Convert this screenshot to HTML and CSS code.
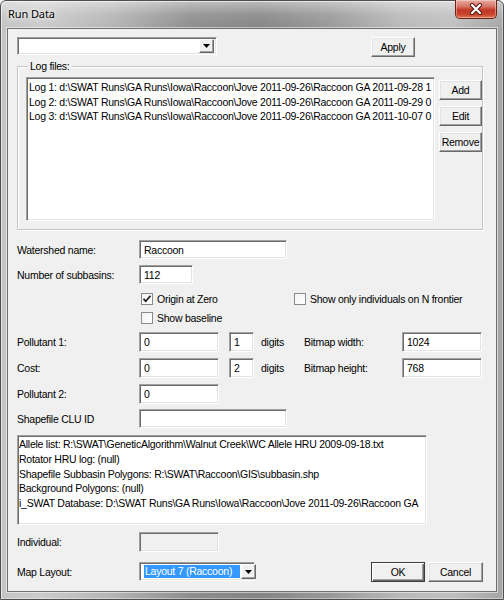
FILE: index.html
```html
<!DOCTYPE html>
<html>
<head>
<meta charset="utf-8">
<title>Run Data</title>
<link rel="stylesheet" href="styles.css">
</head>
<body>
<div class="window">
  <div class="titlebar">
    <span class="title">Run Data</span>
    <span class="close-btn">
      <svg width="16" height="12" viewBox="0 0 16 12">
        <path d="M4 2 L12 10 M12 2 L4 10" stroke="#4a1610" stroke-width="4" stroke-linecap="round"/>
        <path d="M4 2 L12 10 M12 2 L4 10" stroke="#ffffff" stroke-width="2.2" stroke-linecap="round"/>
      </svg>
    </span>
  </div>
  <div class="client">
    <div class="row row-top">
      <div class="combo combo-top">
        <span class="combo-text"></span>
        <span class="combo-btn"><svg width="7" height="4" viewBox="0 0 7 4"><path d="M0 0 H7 L3.5 4 Z" fill="#000"/></svg></span>
      </div>
      <div class="btn btn-apply">Apply</div>
    </div>

    <div class="group">
      <span class="group-title">Log files:</span>
      <div class="group-body">
        <div class="sunken listbox log-list">
          <div class="item">Log 1: d:\SWAT Runs\GA Runs\Iowa\Raccoon\Jove 2011-09-26\Raccoon GA 2011-09-28 1</div>
          <div class="item">Log 2: d:\SWAT Runs\GA Runs\Iowa\Raccoon\Jove 2011-09-26\Raccoon GA 2011-09-29 0</div>
          <div class="item">Log 3: d:\SWAT Runs\GA Runs\Iowa\Raccoon\Jove 2011-09-26\Raccoon GA 2011-10-07 0</div>
        </div>
        <div class="side-buttons">
          <div class="btn btn-side">Add</div>
          <div class="btn btn-side">Edit</div>
          <div class="btn btn-side">Remove</div>
        </div>
      </div>
    </div>

    <div class="row row-watershed">
      <span class="label">Watershed name:</span>
      <div class="sunken field f-wide">Raccoon</div>
    </div>
    <div class="row row-subbasins">
      <span class="label">Number of subbasins:</span>
      <div class="sunken field f-small">112</div>
    </div>
    <div class="row row-check1">
      <span class="label"></span>
      <span class="check checked"><svg width="10" height="10" viewBox="0 0 10 10"><path d="M1.5 4.8 L3.8 7.3 L8.5 1.8" fill="none" stroke="#1c1c1c" stroke-width="1.7"/></svg></span>
      <span class="check-label cl-origin">Origin at Zero</span>
      <span class="check"></span>
      <span class="check-label">Show only individuals on N frontier</span>
    </div>
    <div class="row row-check2">
      <span class="label"></span>
      <span class="check"></span>
      <span class="check-label">Show baseline</span>
    </div>
    <div class="row row-p1">
      <span class="label">Pollutant 1:</span>
      <div class="sunken field f-num">0</div>
      <div class="sunken field f-digit">1</div>
      <span class="digits">digits</span>
      <span class="bm-label">Bitmap width:</span>
      <div class="sunken field f-num">1024</div>
    </div>
    <div class="row row-cost">
      <span class="label">Cost:</span>
      <div class="sunken field f-num">0</div>
      <div class="sunken field f-digit">2</div>
      <span class="digits">digits</span>
      <span class="bm-label">Bitmap height:</span>
      <div class="sunken field f-num">768</div>
    </div>
    <div class="row row-p2">
      <span class="label">Pollutant 2:</span>
      <div class="sunken field f-num">0</div>
    </div>
    <div class="row row-clu">
      <span class="label">Shapefile CLU ID</span>
      <div class="sunken field f-wide f-clu"></div>
    </div>

    <div class="sunken listbox info-list">
      <div class="item">Allele list: R:\SWAT\GeneticAlgorithm\Walnut Creek\WC Allele HRU 2009-09-18.txt</div>
      <div class="item">Rotator HRU log: (null)</div>
      <div class="item">Shapefile Subbasin Polygons: R:\SWAT\Raccoon\GIS\subbasin.shp</div>
      <div class="item">Background Polygons: (null)</div>
      <div class="item">i_SWAT Database: D:\SWAT Runs\GA Runs\Iowa\Raccoon\Jove 2011-09-26\Raccoon GA</div>
    </div>

    <div class="row row-individual">
      <span class="label">Individual:</span>
      <div class="sunken field f-num disabled"></div>
    </div>
    <div class="row row-map">
      <span class="label">Map Layout:</span>
      <div class="combo combo-map">
        <span class="combo-text"><span class="selected">Layout 7 (Raccoon)</span></span>
        <span class="combo-btn"><svg width="7" height="4" viewBox="0 0 7 4"><path d="M0 0 H7 L3.5 4 Z" fill="#000"/></svg></span>
      </div>
      <div class="btn btn-ok">OK</div>
      <div class="btn btn-cancel">Cancel</div>
    </div>
  </div>
</div>
</body>
</html>
```
FILE: styles.css
```css
html, body {
  margin: 0;
  padding: 0;
}
body {
  width: 504px;
  height: 600px;
  overflow: hidden;
  background: #ffffff;
  font-family: "Liberation Sans", Arial, sans-serif;
  font-size: 10.5px;
  letter-spacing: -0.25px;
  color: #000;
}

.window {
  width: 504px;
  height: 600px;
  box-sizing: border-box;
  display: flex;
  flex-direction: column;
  border: 1px solid #4e4e4e;
  border-radius: 6px 6px 0 0;
  padding: 0 6px 7px 6px;
  background:
    linear-gradient(180deg, rgba(255,255,255,0.45) 0, rgba(255,255,255,0.1) 14px, rgba(255,255,255,0) 28px),
    linear-gradient(90deg, #c4c4c4 0, #cbcbcb 40px, #b5b5b5 110px, #8d8d8d 190px, #858585 260px, #999999 330px, #b9b9b9 400px, #c0c0c0 450px, #a4a4a4 504px);
  box-shadow: inset 1px 1px 0 rgba(255,255,255,0.6), inset -1px -1px 0 rgba(255,255,255,0.4);
}

.titlebar {
  height: 27px;
  margin: 0 -6px;
  display: flex;
  align-items: flex-start;
}
.title {
  font-family: "Noto Sans", "Open Sans", sans-serif;
  font-size: 11px;
  letter-spacing: -0.1px;
  margin: 5px 0 0 7px;
  color: #000;
  text-shadow: 0 0 6px rgba(255,255,255,0.95), 0 0 3px rgba(255,255,255,0.9);
}
.close-btn {
  margin-left: auto;
  margin-right: 6px;
  margin-top: -1px;
  width: 42px;
  height: 19px;
  box-sizing: border-box;
  border: 1px solid #6b2118;
  border-top: none;
  border-radius: 0 0 5px 5px;
  background: linear-gradient(180deg, #e9a99e 0, #d8776a 35%, #c23a26 55%, #c9432c 80%, #e07a55 100%);
  box-shadow: inset 0 0 0 1px rgba(255,255,255,0.35);
  display: flex;
  align-items: center;
  justify-content: center;
}

.client {
  flex: 1;
  background: #f0f0f0;
  border: 1px solid #6f6f6f;
  padding: 8px 13px 0 9px;
  display: flex;
  flex-direction: column;
  box-shadow: 0 0 0 1px rgba(255,255,255,0.5);
}

.row {
  display: flex;
  align-items: center;
}
.label {
  width: 122px;
  flex: none;
  white-space: nowrap;
}

/* sunken edit look */
.sunken {
  box-sizing: border-box;
  background: #fff;
  border: 1px solid;
  border-color: #a0a0a0 #ffffff #ffffff #a0a0a0;
  box-shadow: inset 1px 1px 0 #6d6d6d, inset -1px -1px 0 #e3e3e3;
}
.field {
  height: 20px;
  padding: 3px 0 0 4px;
  line-height: 12px;
  white-space: nowrap;
  overflow: hidden;
}
.field.disabled {
  background: #f0f0f0;
}
.f-wide { width: 148px; height: 19px; }
.f-small { width: 54px; height: 19px; }
.f-num { width: 80px; }
.f-digit { width: 25px; margin-left: 10px; }

/* raised button look */
.btn {
  box-sizing: border-box;
  height: 20px;
  display: flex;
  align-items: center;
  justify-content: center;
  background: #f0f0f0;
  border: 1px solid;
  border-color: #ffffff #696969 #696969 #ffffff;
  box-shadow: inset -1px -1px 0 #a0a0a0, inset 1px 1px 0 #e3e3e3;
  flex: none;
}

/* combo boxes */
.combo {
  box-sizing: border-box;
  display: flex;
  align-items: center;
  background: #fff;
  border: 1px solid;
  border-color: #a0a0a0 #ffffff #ffffff #a0a0a0;
  box-shadow: inset 1px 1px 0 #6d6d6d, inset -1px -1px 0 #e3e3e3;
  padding: 2px 2px 2px 2px;
  flex: none;
}
.combo-text {
  flex: 1;
  height: 100%;
  display: flex;
  align-items: center;
}
.combo-btn {
  width: 15px;
  height: 14px;
  box-sizing: border-box;
  background: #f0f0f0;
  border: 1px solid;
  border-color: #ffffff #696969 #696969 #ffffff;
  box-shadow: inset -1px -1px 0 #a0a0a0;
  display: flex;
  align-items: center;
  justify-content: center;
  flex: none;
}

.row-top {
  align-items: flex-start;
}
.combo-top {
  width: 200px;
  height: 18px;
}
.btn-apply {
  width: 44px;
  margin-left: 154px;
}

/* group box */
.group {
  margin-top: 9px;
  height: 164px;
  box-sizing: border-box;
  border: 1px solid #c4c4c4;
  box-shadow: inset 1px 1px 0 #ffffff, 1px 1px 0 #ffffff;
  padding: 0 0 0 8px;
  display: flex;
  flex-direction: column;
}
.group-title {
  align-self: flex-start;
  margin: -7px 0 0 2px;
  padding: 0 2px;
  line-height: 13px;
  background: #f0f0f0;
}
.group-body {
  display: flex;
  margin-top: 4px;
}
.listbox {
  overflow: hidden;
  white-space: nowrap;
}
.log-list {
  width: 410px;
  height: 144px;
  padding: 2px 0 0 2px;
}
.item {
  line-height: 14.6px;
  white-space: nowrap;
}
.side-buttons {
  display: flex;
  flex-direction: column;
  margin-left: 4px;
  margin-top: 3px;
  gap: 6px;
}
.btn-side {
  width: 43px;
}

.row-watershed { margin-top: 10px; }
.row-subbasins { margin-top: 6px; }
.row-check1 { margin-top: 9px; }
.row-check2 { margin-top: 7px; }
.row-p1 { margin-top: 8px; }
.row-cost { margin-top: 6px; }
.row-p2 { margin-top: 6px; }
.row-clu { margin-top: 5px; }

.check {
  width: 12px;
  height: 12px;
  box-sizing: border-box;
  flex: none;
  margin-left: 2px;
  background: linear-gradient(135deg, #f2f2f2, #ffffff);
  border: 1px solid #8b8b8b;
  display: flex;
  align-items: center;
  justify-content: center;
}
.row-check1 .check + .check-label + .check {
  margin-left: 0;
}
.check-label {
  margin-left: 4px;
  white-space: nowrap;
}
.cl-origin {
  width: 137px;
  flex: none;
}

.digits {
  margin-left: 7px;
  width: 43px;
  flex: none;
}
.bm-label {
  width: 98px;
  flex: none;
}

.info-list {
  margin-top: 7px;
  width: 410px;
  height: 90px;
  padding: 1px 0 0 1px;
}
.info-list .item {
  line-height: 14.8px;
}

.row-individual { margin-top: 7px; }
.row-map {
  margin-top: 10px;
  align-items: flex-start;
}
.row-map .label {
  margin-top: 4px;
}
.combo-map {
  width: 116px;
  height: 19px;
  padding: 2px 1px 2px 4px;
}
.combo-map .combo-text {
  padding-right: 1px;
}
.selected {
  background: #3399ff;
  color: #fff;
  display: block;
  width: 95px;
  height: 13px;
  line-height: 13px;
  padding-left: 1px;
  white-space: nowrap;
  overflow: hidden;
}
.combo-map .combo-btn {
  height: 15px;
}
.btn-ok {
  width: 54px;
  margin-left: 116px;
  border: 1px solid #3c3c3c;
  box-shadow: inset 1px 1px 0 #ffffff, inset -1px -1px 0 #696969, inset -2px -2px 0 #a0a0a0;
}
.btn-cancel {
  width: 55px;
  margin-left: 3px;
}
```
